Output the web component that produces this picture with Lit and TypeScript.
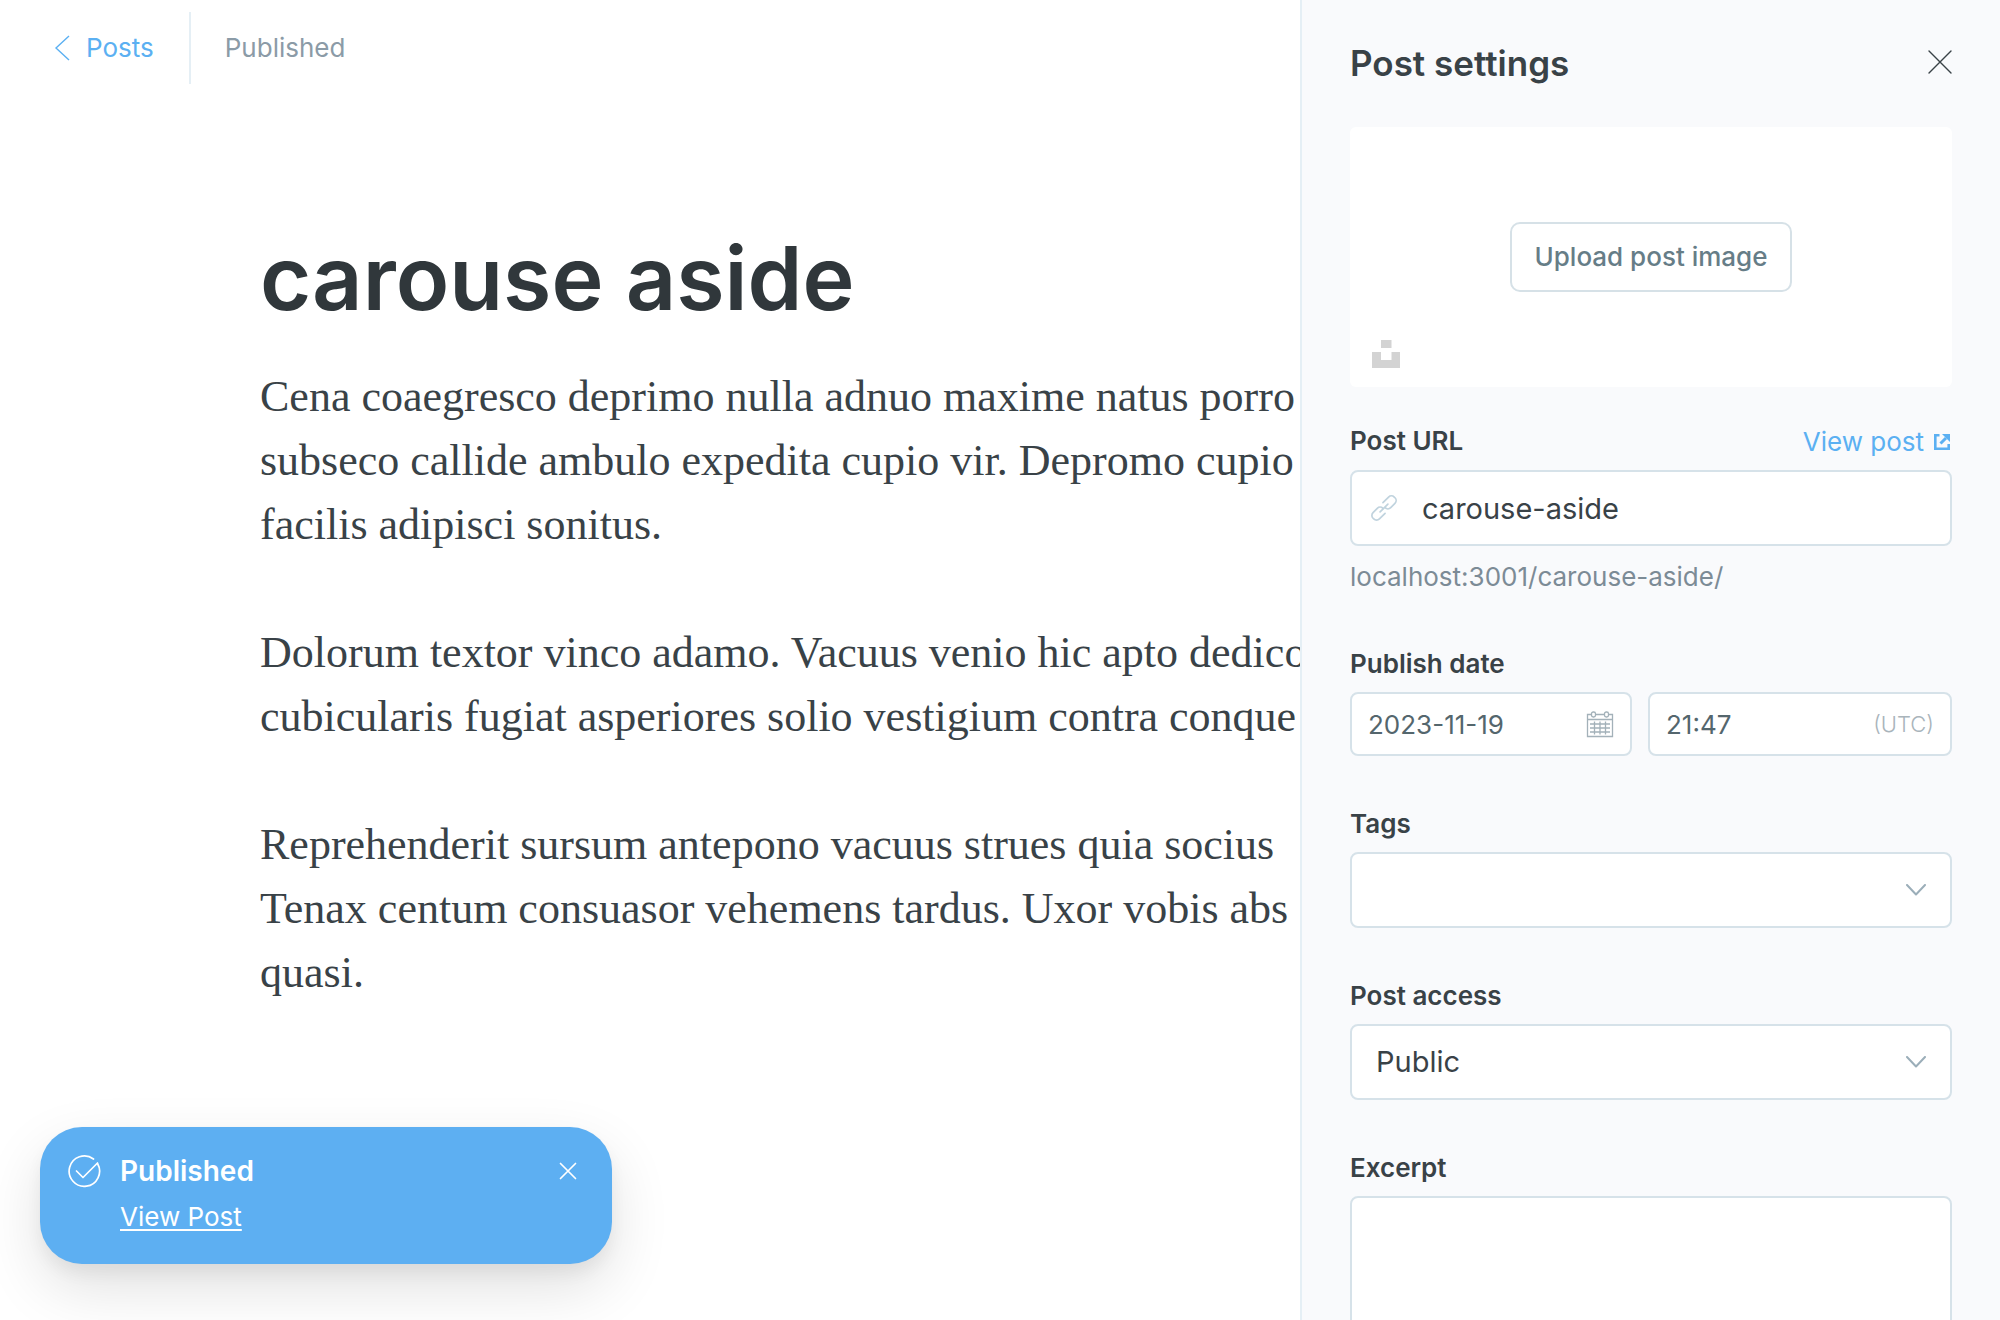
import { LitElement, html, css } from "lit";
import { customElement, state } from "lit/decorators.js";

const icons = {
  back: html`<svg width="16" height="26" viewBox="0 0 16 26" fill="none" stroke="currentColor" stroke-width="1.4" aria-hidden="true"><path d="M15 1 2 13l13 12" /></svg>`,
  close: html`<svg width="24" height="24" viewBox="0 0 24 24" fill="none" stroke="currentColor" stroke-width="1.4" stroke-linecap="round" aria-hidden="true"><path d="M1 1l22 22M23 1L1 23" /></svg>`,
  closeSmall: html`<svg width="18" height="18" viewBox="0 0 18 18" fill="none" stroke="currentColor" stroke-width="1.7" stroke-linecap="round" aria-hidden="true"><path d="M1.5 1.5l15 15M16.5 1.5l-15 15" /></svg>`,
  unsplash: html`<svg width="28" height="28" viewBox="0 0 28 28" fill="currentColor" aria-hidden="true"><path d="M9 0h10.5v8H9zM0 12h9v8h10.5v-8H28v16H0z" /></svg>`,
  external: html`<svg width="16" height="16" viewBox="0 0 16 16" fill="none" stroke="currentColor" stroke-width="2.6" aria-hidden="true"><path d="M5.5 1.3H1.3v13.4h13.4V10" /><path d="M6.500 9.500 12 4" stroke-width="3" /><path d="M8 0H16v8z" fill="currentColor" stroke="none" /></svg>`,
  link: html`<svg width="28" height="28" viewBox="0 0 28 28" fill="none" stroke="currentColor" stroke-width="1.7" stroke-linecap="round" aria-hidden="true"><g transform="rotate(-45 14 14)"><path d="M11 18.5H3a4 4 0 0 1-4-4v-1a4 4 0 0 1 4-4h6a4 4 0 0 1 4 4" /><path d="M17 9.5h8a4 4 0 0 1 4 4v1a4 4 0 0 1-4 4h-6a4 4 0 0 1-4-4" /><path d="M8.5 14h11" /></g></svg>`,
  calendar: html`<svg width="28" height="28" viewBox="0 0 28 28" fill="none" stroke="currentColor" stroke-width="1.3" aria-hidden="true"><path d="M5 4.5H1.5v22h25v-22H23M9 4.5h10M1.5 9.5h25" /><rect x="5.5" y="2" width="4" height="5" rx="1.8" /><rect x="18.5" y="2" width="4" height="5" rx="1.8" /><path d="M4 14h20M4 18h20M4 22h20M8.5 11.5v13M14 11.5v13M19.5 11.5v13" /></svg>`,
  chevron: html`<svg class="chevron" width="20" height="12" viewBox="0 0 20 12" fill="none" stroke="currentColor" stroke-width="2" stroke-linecap="round" stroke-linejoin="round" aria-hidden="true"><path d="M1 1l9 9.5L19 1" /></svg>`,
  check: html`<svg width="34" height="34" viewBox="0 0 34 34" fill="none" stroke="currentColor" stroke-width="1.7" stroke-linecap="round" stroke-linejoin="round" aria-hidden="true"><path d="M26.5 5A15.2 15.2 0 1 0 30.5 9.5" /><path d="M9.5 17l6.5 6.5L30.5 9" /></svg>`,
};

const paragraphs = [
  ["Cena coaegresco deprimo nulla adnuo maxime natus porro", "subseco callide ambulo expedita cupio vir. Depromo cupio", "facilis adipisci sonitus."],
  ["Dolorum textor vinco adamo. Vacuus venio hic apto dedico", "cubicularis fugiat asperiores solio vestigium contra conque"],
  ["Reprehenderit sursum antepono vacuus strues quia socius", "Tenax centum consuasor vehemens tardus. Uxor vobis abs", "quasi."],
];

@customElement("post-editor")
export class PostEditor extends LitElement {
  static styles = css`
    :host { display: block; min-width: 0; overflow: hidden; }
    .bar { display: flex; align-items: center; padding: 12px 54px; font-size: 26px; line-height: 36px; }
    .back { display: flex; align-items: center; gap: 16px; padding-right: 35px; color: #5bb0f2; text-decoration: none; }
    .status { display: flex; align-items: center; height: 72px; padding-left: 34px; border-left: 2px solid #e5eff5; color: #8b9ba7; }
    .page { padding: 126px 0 0 20%; white-space: nowrap; }
    h1 { margin: 0 0 31px; color: #30373b; font-size: 88px; line-height: 112px; font-weight: 600; }
    p { margin: 0 0 64px; color: #394247; font-family: Georgia, "Liberation Serif", serif; font-size: 44px; line-height: 64px; }
  `;
  render() {
    return html`
      <header class="bar">
        <a class="back" href="#posts">${icons.back}Posts</a>
        <span class="status">Published</span>
      </header>
      <article class="page">
        <h1>carouse aside</h1>
        ${paragraphs.map((lines) => html`<p>${lines.map((line, i) => html`${i ? html`<br />` : ""}${line}`)}</p>`)}
      </article>
    `;
  }
}

@customElement("post-settings")
export class PostSettings extends LitElement {
  static styles = css`
    :host { display: block; box-sizing: border-box; min-width: 0; overflow: hidden; padding: 40px 48px 0; background: #f9fafc; border-left: 2px solid #e5eff5; color: #394247; font-size: 26px; line-height: 36px; }
    * { box-sizing: border-box; }
    button { padding: 0; border: 0; background: none; color: inherit; font: inherit; cursor: pointer; }
    .head { display: flex; justify-content: space-between; height: 48px; }
    h2 { margin: 0; font-size: 35px; line-height: 47px; font-weight: 600; }
    .icon { display: flex; padding-top: 10px; }
    .cover { display: grid; place-items: center; position: relative; height: 260px; margin: 39px 0 36px; border-radius: 6px; background: #fff; }
    .upload { height: 70px; padding: 0 23px; border: 2px solid #d6e1e7; border-radius: 10px; color: #667d87; font-weight: 500; }
    .unsplash { position: absolute; left: 22px; bottom: 19px; display: flex; color: #d3d3d3; }
    .field { display: block; margin-bottom: 50px; }
    .row { display: flex; justify-content: space-between; }
    .label { display: block; margin-bottom: 10px; font-weight: 600; }
    .row .label { margin-bottom: 11px; }
    .view { display: flex; align-items: center; gap: 10px; height: 38px; padding-right: 2px; color: #5bb0f2; text-decoration: none; }
    .box { display: flex; align-items: center; position: relative; height: 76px; border: 2px solid #d6e2e9; border-radius: 8px; background: #fff; }
    .short { height: 64px; }
    .box input, .box select { flex: 1; width: 100%; min-width: 0; height: 100%; margin: 0; border: 0; outline: 0; background: none; color: inherit; font: inherit; appearance: none; }
    .big { font-size: 29px; }
    .big input, .big select { padding: 0 24px; }
    .url { padding-left: 18px; }
    .url svg { flex: none; color: #c0d3de; }
    .short { padding: 0 16px; color: #54666d; }
    .short input { padding: 0; }
    .short svg { flex: none; color: #a3b1b9; }
    .zone { color: #a9b4bb; font-size: 22px; font-weight: 300; }
    .help { margin: 12px 0 0; color: #7c8b96; line-height: 38px; }
    .pair { display: grid; grid-template-columns: 282fr 304fr; gap: 16px; }
    .chevron { position: absolute; right: 24px; color: #9baeb9; pointer-events: none; }
    textarea { display: block; width: 100%; height: 216px; border: 2px solid #d6e2e9; border-radius: 8px; background: #fff; font: inherit; resize: none; }
  `;
  render() {
    return html`
      <div class="head">
        <h2>Post settings</h2>
        <button class="icon" aria-label="Close">${icons.close}</button>
      </div>
      <div class="cover">
        <button class="upload">Upload post image</button>
        <button class="unsplash" aria-label="Unsplash">${icons.unsplash}</button>
      </div>
      <div class="field">
        <div class="row">
          <label class="label" for="url">Post URL</label>
          <a class="view" href="#view">View post ${icons.external}</a>
        </div>
        <div class="box big url">${icons.link}<input id="url" type="text" value="carouse-aside" /></div>
        <p class="help">localhost:3001/carouse-aside/</p>
      </div>
      <div class="field">
        <label class="label" for="date">Publish date</label>
        <div class="pair">
          <div class="box short"><input id="date" type="text" value="2023-11-19" />${icons.calendar}</div>
          <div class="box short"><input type="text" aria-label="Publish time" value="21:47" /><span class="zone">(UTC)</span></div>
        </div>
      </div>
      <div class="field">
        <label class="label" for="tags">Tags</label>
        <div class="box big"><input id="tags" type="text" role="combobox" aria-expanded="false" />${icons.chevron}</div>
      </div>
      <div class="field">
        <label class="label" for="access">Post access</label>
        <div class="box big"><select id="access"><option>Public</option></select>${icons.chevron}</div>
      </div>
      <div class="field">
        <label class="label" for="excerpt">Excerpt</label>
        <textarea id="excerpt"></textarea>
      </div>
    `;
  }
}

@customElement("publish-toast")
export class PublishToast extends LitElement {
  static styles = css`
    :host { display: flex; align-items: flex-start; box-sizing: border-box; padding: 27px 35px 28px 27px; border-radius: 42px; background: #5daff2; color: #fff; box-shadow: 0 0 2px rgba(0, 0, 0, 0.02), 0 10px 16px rgba(0, 0, 0, 0.05), 0 24px 60px rgba(0, 0, 0, 0.12); }
    .text { display: flex; flex: 1; flex-direction: column; align-items: flex-start; gap: 10px; padding-left: 19px; }
    .title { font-size: 28px; line-height: 34px; font-weight: 600; }
    a { color: inherit; font-size: 26px; line-height: 38px; text-underline-offset: 3px; text-decoration-thickness: 2px; }
    button { display: flex; padding: 8px 0; border: 0; background: none; color: inherit; }
  `;
  render() {
    return html`
      ${icons.check}
      <div class="text">
        <span class="title">Published</span>
        <a href="#view">View Post</a>
      </div>
      <button aria-label="Dismiss">${icons.closeSmall}</button>
    `;
  }
}

@customElement("app-root")
export class AppRoot extends LitElement {
  static styles = css`
    :host { display: grid; grid-template-columns: minmax(0, 13fr) minmax(0, 7fr); position: relative; height: 100vh; overflow: hidden; background: #fff; font-family: Inter, "Liberation Sans", sans-serif; }
    .toast { position: absolute; left: 40px; bottom: 56px; width: 572px; }
  `;
  @state() private notified = true;
  render() {
    return html`
      <post-editor></post-editor>
      <post-settings></post-settings>
      ${this.notified ? html`<publish-toast class="toast" role="status"></publish-toast>` : ""}
    `;
  }
}
